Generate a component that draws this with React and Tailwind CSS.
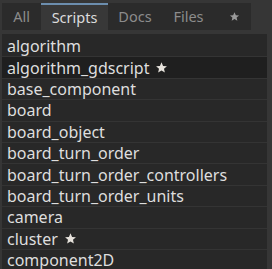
import React from "react";

const items = [
  ["algorithm", false, false],
  ["algorithm_gdscript", true, true],
  ["base_component", false, false],
  ["board", false, false],
  ["board_object", false, false],
  ["board_turn_order", false, false],
  ["board_turn_order_controllers", false, false],
  ["board_turn_order_units", false, false],
  ["camera", false, false],
  ["cluster", true, false],
  ["component2D", false, false],
];

function Star({ className }) {
  return (
    <svg viewBox="0 0 24 24" className={className} fill="currentColor">
      <path d="M12 2.5l2.9 6.6 7.1.6-5.4 4.7 1.6 7-6.2-3.7-6.2 3.7 1.6-7L2 9.7l7.1-.6z" />
    </svg>
  );
}

export default function App() {
  return (
    <div
      className="w-[272px] h-[269px] overflow-hidden bg-[#363636] pt-[3px] pl-[2px]"
      style={{ fontFamily: '"Noto Sans", sans-serif' }}
    >
      <div className="flex h-[27px] w-[249px] bg-[#2b2b2b] text-[14.5px] text-[#8c8c8c]">
        <div className="w-[39px] flex items-center justify-center">All</div>
        <div className="w-[67px] flex items-center justify-center bg-[#383838] text-[#dcdcdc] border-t-2 border-[#6c8eae]">Scripts</div>
        <div className="w-[54px] flex items-center justify-center">Docs</div>
        <div className="w-[53px] flex items-center justify-center">Files</div>
        <div className="flex-1 flex items-center justify-center pl-[2px]">
          <Star className="w-[11px] h-[11px] text-[#9a9a9a]" />
        </div>
      </div>
      <div className="mt-[4px] w-[265px] h-[240px] bg-[#282828] pt-[2px] flex flex-col">
        {items.map(([name, star, sel], i) => (
          <div
            key={name}
            className={
              "h-[21.4px] shrink-0 flex items-center pl-[5px] text-[16px] text-[#dedede] border-b border-[#343434] " +
              (sel ? "bg-[#1f1f1f]" : "")
            }
          >
            <span className="leading-none">{name}</span>
            {star && <Star className="ml-[6px] w-[13px] h-[13px] text-[#e6e2dc]" />}
          </div>
        ))}
      </div>
    </div>
  );
}
